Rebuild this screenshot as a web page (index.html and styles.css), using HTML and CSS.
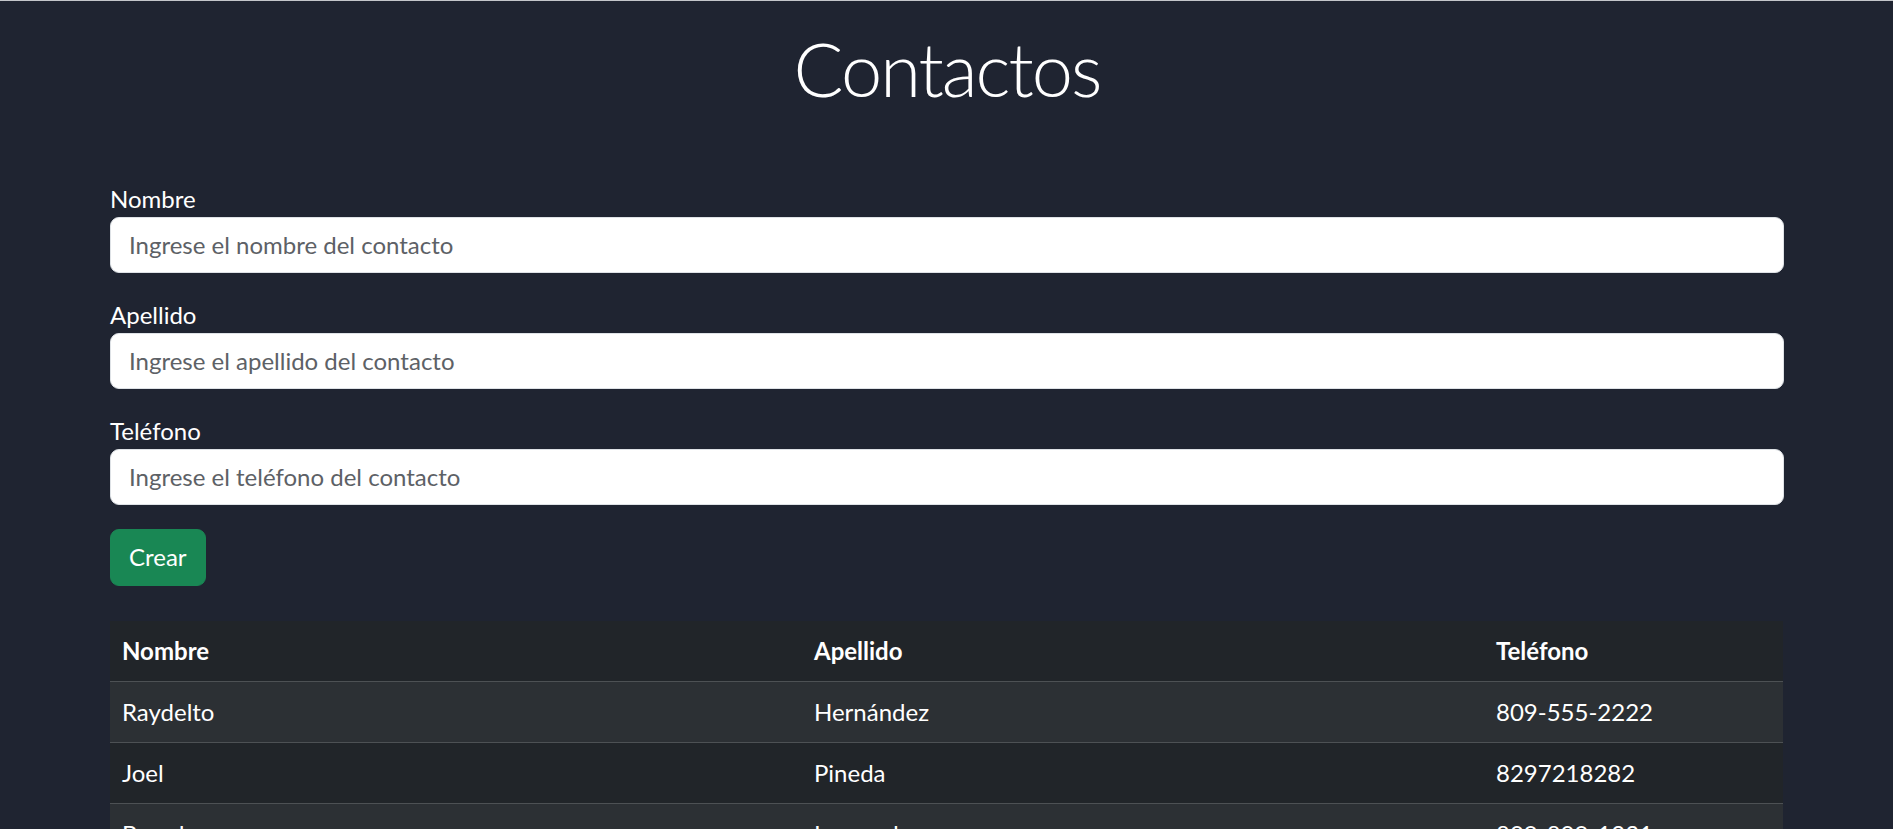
FILE: index.html
```html
<!DOCTYPE html>
<html lang="es">
<head>
<meta charset="utf-8">
<title>Contactos</title>
<link rel="stylesheet" href="styles.css">
</head>
<body>
<main class="container">
  <h1 class="title">Contactos</h1>
  <form class="form">
    <div class="group">
      <label class="label" for="nombre">Nombre</label>
      <input class="input" id="nombre" type="text" placeholder="Ingrese el nombre del contacto">
    </div>
    <div class="group">
      <label class="label" for="apellido">Apellido</label>
      <input class="input" id="apellido" type="text" placeholder="Ingrese el apellido del contacto">
    </div>
    <div class="group">
      <label class="label" for="telefono">Teléfono</label>
      <input class="input" id="telefono" type="text" placeholder="Ingrese el teléfono del contacto">
    </div>
    <div class="actions">
      <button class="btn" type="button">Crear</button>
    </div>
  </form>
  <table class="table">
    <thead>
      <tr>
        <th class="col-nombre">Nombre</th>
        <th class="col-apellido">Apellido</th>
        <th class="col-telefono">Teléfono</th>
      </tr>
    </thead>
    <tbody>
      <tr><td>Raydelto</td><td>Hernández</td><td>809-555-2222</td></tr>
      <tr><td>Joel</td><td>Pineda</td><td>8297218282</td></tr>
      <tr><td>Brandon</td><td>Leonardo</td><td>809-809-1231</td></tr>
    </tbody>
  </table>
</main>
</body>
</html>
```
FILE: styles.css
```css
html, body {
  margin: 0;
  padding: 0;
}
body {
  background: #1f2431;
  color: #ffffff;
  font-family: "Segoe UI", Lato, "Noto Sans", sans-serif;
  font-size: 24px;
  line-height: 36px;
  border-top: 1px solid #c4c6ca;
  height: 828px;
  overflow: hidden;
}
.container {
  width: 1674px;
  margin: 0 auto;
  padding-left: 1px;
}
.title {
  margin: 24px 0 0;
  text-align: center;
  font-weight: 300;
  font-size: 74px;
  line-height: 1.2;
  letter-spacing: -2px;
  color: #ffffff;
}
.form {
  margin-top: 67px;
  display: flex;
  flex-direction: column;
  gap: 24px;
}
.group {
  display: flex;
  flex-direction: column;
}
.label {
  font-size: 24px;
  line-height: 36px;
}
.input {
  box-sizing: border-box;
  width: 100%;
  height: 56px;
  padding: 9px 18px;
  font-family: inherit;
  font-size: 24px;
  line-height: 36px;
  color: #212529;
  background: #ffffff;
  border: 1.5px solid #dee2e6;
  border-radius: 9px;
  outline: none;
}
.input::placeholder {
  color: #5d6166;
  opacity: 1;
}
.actions {
  display: flex;
}
.btn {
  height: 57px;
  padding: 9px 18px;
  font-family: inherit;
  font-size: 24px;
  line-height: 36px;
  color: #ffffff;
  background: #198754;
  border: 1.5px solid #198754;
  border-radius: 9px;
}
.table {
  margin-top: 35px;
  width: 1673px;
  border-collapse: collapse;
  table-layout: fixed;
  background: #212529;
  color: #ffffff;
}
.table th, .table td {
  padding: 12px;
  text-align: left;
  font-size: 24px;
  line-height: 36px;
  border-bottom: 1px solid #4d5154;
}
.table th {
  font-weight: 700;
}
.table tbody tr:nth-child(odd) {
  background: #2c3034;
}
.col-nombre { width: 668px; }
.col-apellido { width: 658px; }
.col-telefono { width: auto; }
```
